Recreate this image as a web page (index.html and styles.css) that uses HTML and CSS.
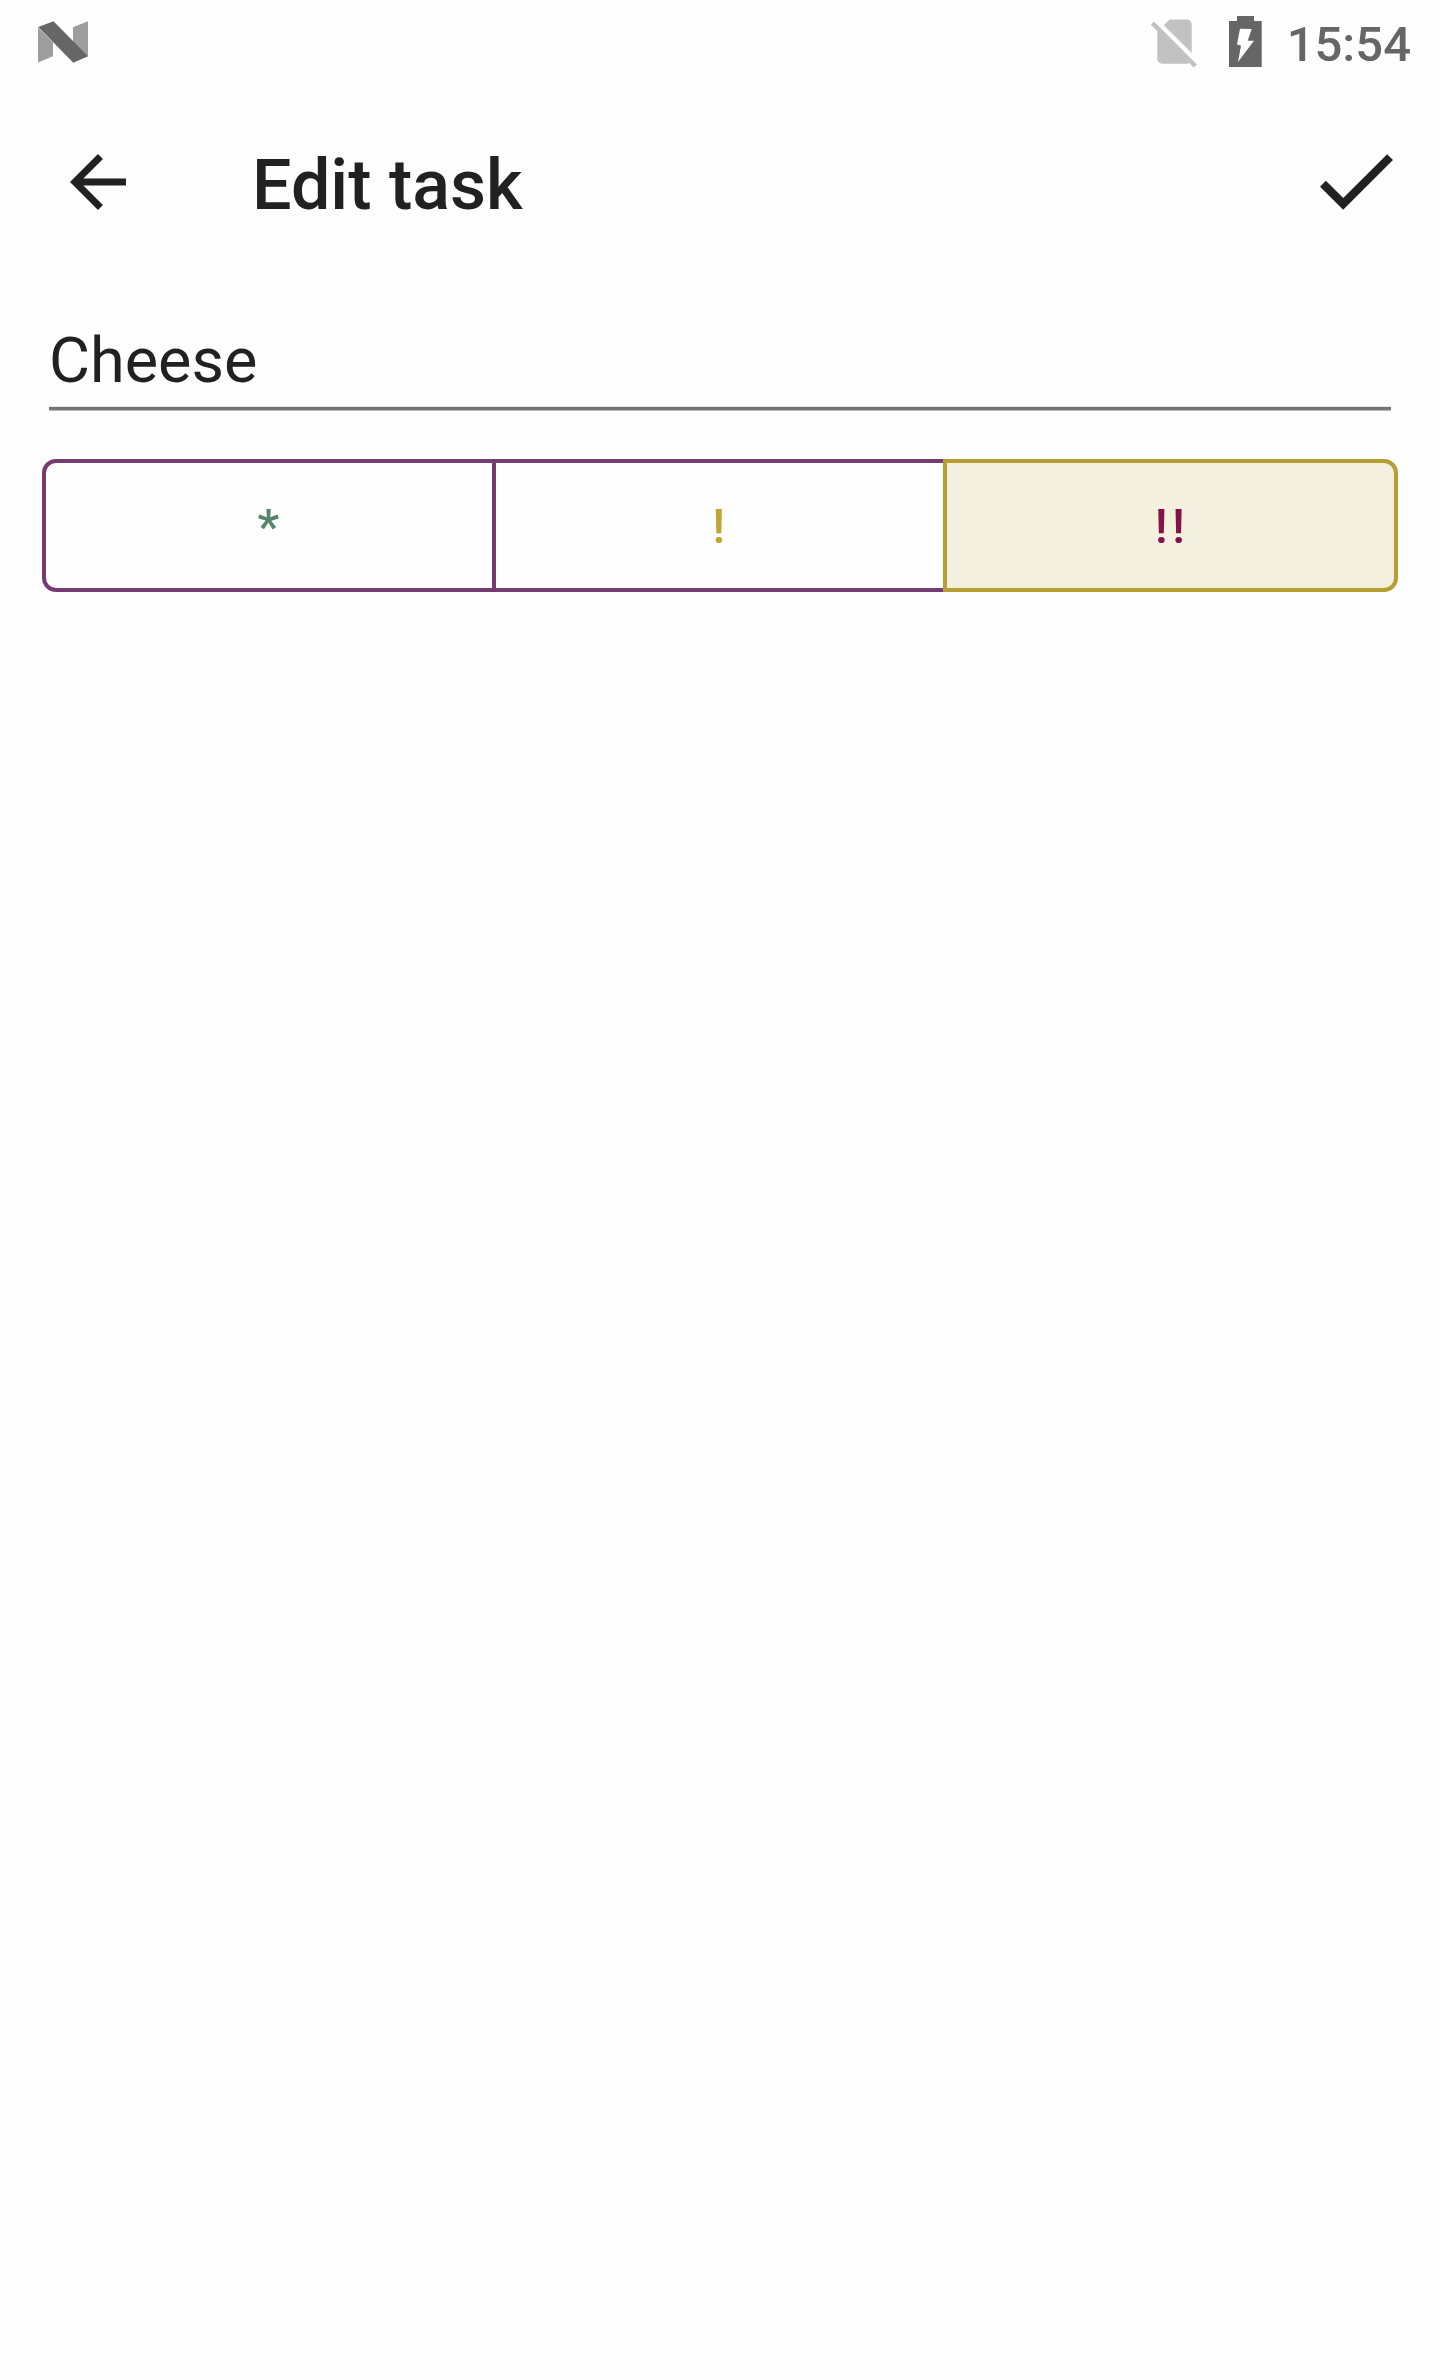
FILE: index.html
```html
<!DOCTYPE html>
<html lang="en">
<head>
<meta charset="utf-8">
<title>Edit task</title>
<link rel="stylesheet" href="styles.css">
</head>
<body>
<div class="status-bar">
  <svg class="icon-n" width="50" height="42" viewBox="38 21 50 42">
    <path fill="#9e9e9e" d="M38 27.2 53 42.5V56.2L38 62.6zM73 27.2 88 21.3V56.5L73 42z"/>
    <path fill="#666" d="M38.3 26.9 53.5 21.3 88 56.3 73.3 62.7z"/>
  </svg>
  <div class="status-icons">
    <svg class="icon-sim" width="59" height="59" viewBox="0 0 24 24">
      <path fill="#c2c2c2" d="M18.99 5c0-1.1-.89-2-1.99-2h-7L7.66 5.34 19 16.68zM3.65 3.88 2.38 5.15 5 7.77V19c0 1.1.9 2 2 2h10.01c.35 0 .67-.1.96-.26l1.88 1.88 1.27-1.27z"/>
    </svg>
    <svg class="icon-battery" width="33" height="51" viewBox="0 0 33 51">
      <path fill="#666" fill-rule="evenodd" d="M8 0H25V5H32.7V51H0V5H8zM11 12.8 22.7 13 18.7 24.8H25L9 46 12 29.5 8 28.5z"/>
    </svg>
    <span class="clock">15:54</span>
  </div>
</div>
<header class="toolbar">
  <svg class="icon-back" width="84" height="84" viewBox="0 0 24 24">
    <path fill="#212121" d="M20 11H7.83l5.59-5.59L12 4l-8 8 8 8 1.41-1.41L7.83 13H20z"/>
  </svg>
  <h1 class="title">Edit task</h1>
  <svg class="icon-done" width="73" height="56" viewBox="3.41 5.59 17.59 13.41">
    <path fill="#212121" d="M9 16.17 4.83 12l-1.42 1.41L9 19 21 7l-1.41-1.41z"/>
  </svg>
</header>
<main class="form">
  <div class="task-name">Cheese</div>
  <div class="priorities">
    <div class="priority low">*</div>
    <div class="priority medium">!</div>
    <div class="priority high selected">!!</div>
  </div>
</main>
</body>
</html>
```
FILE: styles.css
```css
* { box-sizing: border-box; }

body {
  margin: 0;
  min-height: 2380px;
  background: #fefefe;
  color: #212121;
  font-family: Roboto, "Liberation Sans", sans-serif;
}

svg { display: block; flex: none; }

.status-bar {
  display: flex;
  justify-content: space-between;
  align-items: center;
  height: 84px;
  padding: 0 29px 0 38px;
}

.status-icons { display: flex; align-items: center; }
.icon-sim { margin-bottom: 2px; }
.icon-battery { margin: 0 25px 1px; }

.clock {
  color: #666;
  font-size: 49px;
  font-weight: 500;
  line-height: 58px;
  padding-top: 5px;
}

.toolbar {
  display: flex;
  align-items: center;
  height: 196px;
  padding: 0 47px 0 56px;
}

.title {
  flex: 1;
  margin: 0 0 0 112px;
  padding-top: 5px;
  font-size: 70px;
  font-weight: 500;
  line-height: 82px;
}

.form { padding: 42px 42px 0; }

.task-name {
  height: 89px;
  margin: 0 7px 48px;
  font-size: 63px;
  line-height: 78px;
  background: linear-gradient(#e6e6e6 1px, #757575 1px, #757575 4px, #bababa 4px) bottom / 100% 5px no-repeat;
}

.priorities {
  display: grid;
  grid-template-columns: 450px 451px 455px;
  height: 133px;
}

.priority {
  padding: 4px 0 0 3px;
  border: 4px solid #773b73;
  font-size: 49px;
  font-weight: 500;
  letter-spacing: 0.0893em;
  line-height: 120px;
  text-align: center;
}

.priority:not(:last-child) { margin-right: -4px; }
.priority:first-child { border-radius: 14px 0 0 14px; }
.priority:last-child { border-radius: 0 14px 14px 0; }

.low { color: #55866c; }
.medium { color: #bfa632; }
.high { color: #831247; }
.selected { border-color: #b69e30; background: #f4f0e0; }
```
